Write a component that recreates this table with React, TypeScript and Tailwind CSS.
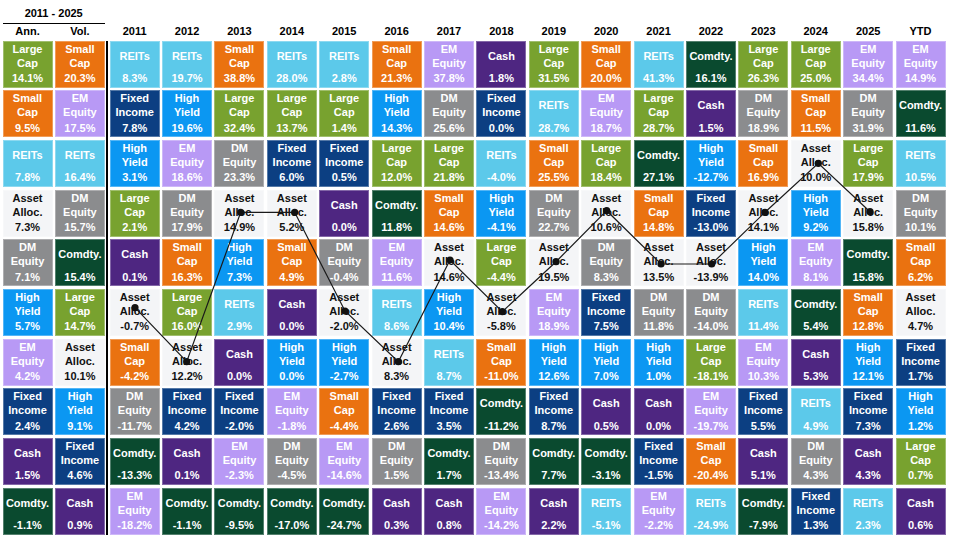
import React from "react";

type Key = "LC" | "SC" | "RE" | "EM" | "DM" | "FI" | "HY" | "CA" | "CO" | "AA";

const ASSETS: Record<Key, { name: string[]; bg: string; dark?: boolean }> = {
  LC: { name: ["Large", "Cap"], bg: "bg-[#78a22f]" },
  SC: { name: ["Small", "Cap"], bg: "bg-[#ea7210]" },
  RE: { name: ["REITs"], bg: "bg-[#5cc9ea]" },
  EM: { name: ["EM", "Equity"], bg: "bg-[#b899f5]" },
  DM: { name: ["DM", "Equity"], bg: "bg-[#8b8c8e]" },
  FI: { name: ["Fixed", "Income"], bg: "bg-[#0c3f82]" },
  HY: { name: ["High", "Yield"], bg: "bg-[#0b97f2]" },
  CA: { name: ["Cash"], bg: "bg-[#4e2681]" },
  CO: { name: ["Comdty."], bg: "bg-[#0a4a2f]" },
  AA: { name: ["Asset", "Alloc."], bg: "bg-[#f4f5f7]", dark: true },
};

// "KEY value" per cell, top row first
const LEFT: [string, string[]][] = [
  ["Ann.", ["LC 14.1%", "SC 9.5%", "RE 7.8%", "AA 7.3%", "DM 7.1%", "HY 5.7%", "EM 4.2%", "FI 2.4%", "CA 1.5%", "CO -1.1%"]],
  ["Vol.", ["SC 20.3%", "EM 17.5%", "RE 16.4%", "DM 15.7%", "CO 15.4%", "LC 14.7%", "AA 10.1%", "HY 9.1%", "FI 4.6%", "CA 0.9%"]],
];

const YEARS: [string, string[]][] = [
  ["2011", ["RE 8.3%", "FI 7.8%", "HY 3.1%", "LC 2.1%", "CA 0.1%", "AA -0.7%", "SC -4.2%", "DM -11.7%", "CO -13.3%", "EM -18.2%"]],
  ["2012", ["RE 19.7%", "HY 19.6%", "EM 18.6%", "DM 17.9%", "SC 16.3%", "LC 16.0%", "AA 12.2%", "FI 4.2%", "CA 0.1%", "CO -1.1%"]],
  ["2013", ["SC 38.8%", "LC 32.4%", "DM 23.3%", "AA 14.9%", "HY 7.3%", "RE 2.9%", "CA 0.0%", "FI -2.0%", "EM -2.3%", "CO -9.5%"]],
  ["2014", ["RE 28.0%", "LC 13.7%", "FI 6.0%", "AA 5.2%", "SC 4.9%", "CA 0.0%", "HY 0.0%", "EM -1.8%", "DM -4.5%", "CO -17.0%"]],
  ["2015", ["RE 2.8%", "LC 1.4%", "FI 0.5%", "CA 0.0%", "DM -0.4%", "AA -2.0%", "HY -2.7%", "SC -4.4%", "EM -14.6%", "CO -24.7%"]],
  ["2016", ["SC 21.3%", "HY 14.3%", "LC 12.0%", "CO 11.8%", "EM 11.6%", "RE 8.6%", "AA 8.3%", "FI 2.6%", "DM 1.5%", "CA 0.3%"]],
  ["2017", ["EM 37.8%", "DM 25.6%", "LC 21.8%", "SC 14.6%", "AA 14.6%", "HY 10.4%", "RE 8.7%", "FI 3.5%", "CO 1.7%", "CA 0.8%"]],
  ["2018", ["CA 1.8%", "FI 0.0%", "RE -4.0%", "HY -4.1%", "LC -4.4%", "AA -5.8%", "SC -11.0%", "CO -11.2%", "DM -13.4%", "EM -14.2%"]],
  ["2019", ["LC 31.5%", "RE 28.7%", "SC 25.5%", "DM 22.7%", "AA 19.5%", "EM 18.9%", "HY 12.6%", "FI 8.7%", "CO 7.7%", "CA 2.2%"]],
  ["2020", ["SC 20.0%", "EM 18.7%", "LC 18.4%", "AA 10.6%", "DM 8.3%", "FI 7.5%", "HY 7.0%", "CA 0.5%", "CO -3.1%", "RE -5.1%"]],
  ["2021", ["RE 41.3%", "LC 28.7%", "CO 27.1%", "SC 14.8%", "AA 13.5%", "DM 11.8%", "HY 1.0%", "CA 0.0%", "FI -1.5%", "EM -2.2%"]],
  ["2022", ["CO 16.1%", "CA 1.5%", "HY -12.7%", "FI -13.0%", "AA -13.9%", "DM -14.0%", "LC -18.1%", "EM -19.7%", "SC -20.4%", "RE -24.9%"]],
  ["2023", ["LC 26.3%", "DM 18.9%", "SC 16.9%", "AA 14.1%", "HY 14.0%", "RE 11.4%", "EM 10.3%", "FI 5.5%", "CA 5.1%", "CO -7.9%"]],
  ["2024", ["LC 25.0%", "SC 11.5%", "AA 10.0%", "HY 9.2%", "EM 8.1%", "CO 5.4%", "CA 5.3%", "RE 4.9%", "DM 4.3%", "FI 1.3%"]],
  ["2025", ["EM 34.4%", "DM 31.9%", "LC 17.9%", "AA 15.8%", "CO 15.8%", "SC 12.8%", "HY 12.1%", "FI 7.3%", "CA 4.3%", "RE 2.3%"]],
  ["YTD", ["EM 14.9%", "CO 11.6%", "RE 10.5%", "DM 10.1%", "SC 6.2%", "AA 4.7%", "FI 1.7%", "HY 1.2%", "LC 0.7%", "CA 0.6%"]],
];

// asset allocation dots, 2011 → 2025
const DOTS: [number, number][] = [
  [135, 307.7], [186.7, 361.7], [240.7, 212.3], [294.7, 212.3], [345, 311],
  [398.3, 361.7], [450, 260], [502.3, 311.7], [556, 261.7], [606.7, 210.7],
  [661, 264], [711.7, 264], [765, 212.3], [818.3, 163.3], [870, 211.7],
];

function Cell({ spec }: { spec: string }) {
  const [k, value] = spec.split(" ");
  const a = ASSETS[k as Key];
  return (
    <div className={`flex flex-col border border-white/30 ${a.bg} ${a.dark ? "text-[#111]" : "text-white"}`}>
      <div className="flex h-[28px] flex-col justify-center">
        {a.name.map((n) => (
          <div key={n} className="leading-[14px]">{n}</div>
        ))}
      </div>
      <div className="flex flex-1 items-center justify-center leading-[14px]">{value}</div>
    </div>
  );
}

function Column({ label, cells }: { label: string; cells: string[] }) {
  return (
    <>
      <div className="flex items-center justify-center text-[11px] leading-[13px] text-black">{label}</div>
      {cells.map((c, i) => (
        <Cell key={i} spec={c} />
      ))}
    </>
  );
}

export default function App() {
  return (
    <div className="relative h-[542px] w-[975px] overflow-hidden bg-white pl-[2.5px] font-['Liberation_Sans',Arial,sans-serif] text-[11px] font-bold">
      <div className="w-[102.4px] pt-[6px]">
        <div className="text-center leading-[14px] text-black">2011 - 2025</div>
        <div className="mt-[2.5px] h-[1.5px] bg-black" />
      </div>

      <div className="mt-[1px] grid grid-flow-col grid-cols-[50px_50px_0px_repeat(16,50px)] grid-rows-[13px_repeat(10,47px)] gap-x-[2.4px] gap-y-[2.67px] text-center">
        {LEFT.map(([l, c]) => (
          <Column key={l} label={l} cells={c} />
        ))}
        <div />
        <div className="row-span-10 -ml-[1px] w-[2px] bg-black" />
        {YEARS.map(([l, c]) => (
          <Column key={l} label={l} cells={c} />
        ))}
      </div>

      <svg className="pointer-events-none absolute inset-0" width={975} height={542}>
        <polyline
          points={DOTS.map(([x, y]) => `${x},${y}`).join(" ")}
          fill="none"
          stroke="#1a1a1a"
          strokeWidth={1.2}
        />
        {DOTS.map(([x, y], i) => (
          <circle key={i} cx={x} cy={y} r={3.6} fill="#111" />
        ))}
      </svg>
    </div>
  );
}
